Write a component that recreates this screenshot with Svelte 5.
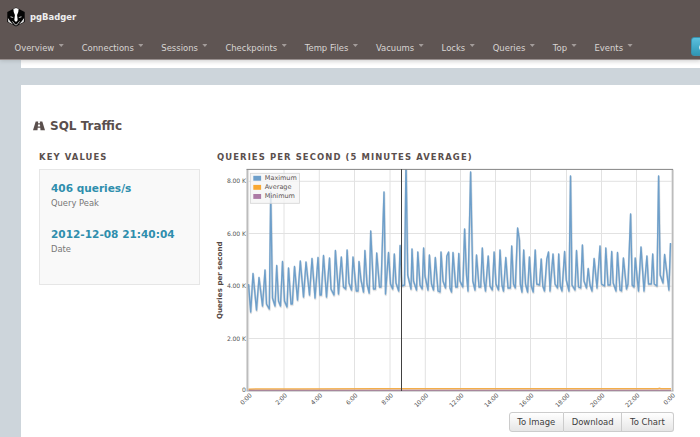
<script>
  const menu = ['Overview', 'Connections', 'Sessions', 'Checkpoints', 'Temp Files', 'Vacuums', 'Locks', 'Queries', 'Top', 'Events'];
  const keys = [
    { value: '406 queries/s', label: 'Query Peak' },
    { value: '2012-12-08 21:40:04', label: 'Date' }
  ];
  const legend = [
    { name: 'Maximum', color: '#6e9fca' },
    { name: 'Average', color: '#f9a832' },
    { name: 'Minimum', color: '#ad7ba6' }
  ];
  const rows = [[181.3, '8.00 K'], [233.5, '6.00 K'], [286.2, '4.00 K'], [338.5, '2.00 K'], [390.3, '0']];
  const cols = [[248.7, '0:00'], [284, '2:00'], [319.3, '4:00'], [354.5, '6:00'], [390, '8:00'], [425.3, '10:00'], [460.5, '12:00'], [495.5, '14:00'], [530.5, '16:00'], [566.5, '18:00'], [601.5, '20:00'], [636.5, '22:00'], [672, '0:00']];
  const traffic = `248.5,284 250.7,312 253,273.5 256.5,310 259,277.5 262.5,306 265,270 266.5,304 269.3,309 270.7,192 272.5,298 275,306 276.7,265.5 278.5,301 280.5,306 282.5,261.5 284.5,301 287,307 288.5,268 291,304 292.3,304 294.5,266.5 297.5,300 300.3,261 303.5,297 306,262 309.5,295 312,258.5 315,298 318,257.5 320,295 321.3,295 323.5,255.5 326.5,297 329.5,258 331,289 334,295 335.4,250.5 338.5,294 341.3,257 343.5,287 345.7,289 347.1,250 349,283 351.5,290 353,257 356.3,291 358,291 359,261.5 361,280 363.5,292 364.9,250.5 367,284 369.2,293 370.7,231 373.5,289 375.3,289 376.7,253 379.5,287 381,287 384,192 385.5,294 388.5,252.5 390.5,284 392.7,289 394.3,254 396,283 398.7,291 400.1,245.5 401.8,286 404.5,285 406,160 407.7,275 411,289 412,249 413.5,281 416.5,290 417.8,252 420,285 422.2,289 423.6,248 425,276 428,290 429.4,255 431.5,284 433.5,290 435.3,257.5 438,291 440,292 441,252 443,281 445.5,288 446.8,256 448.6,252 450,288 451.5,292 453,252.5 455.7,287 457.3,287 458.8,253.5 460,281 462.8,287 464.6,229 466.5,275 468,291 470.6,172 472.8,281 475,290 476.5,255 479,287 480.7,287 482.3,248 484,281 485.5,291 488.2,256 490,286 492.3,290 494.1,252 496,284 498.5,290 500,250 502,285 503.5,291 505.8,257.5 508,288 510.3,288 511.7,246 513.5,284 515.3,288 517.6,228 519.4,240 520.3,284 522,292 523.7,250 525.5,284 527.6,292 529.4,257 531.3,286 533.2,292 535.2,250 536.7,284 539.5,285 541.2,259 542.8,286 544.5,291 546.8,259 548.5,252 550,291 553,254 555,284 557.5,288 558.7,254 560.3,286 562,291 564.6,251.5 566.3,280 569,291 570.5,176 572,285 575,290 576.5,250.5 578.5,287 580.7,288 582.4,245 584,281 586.5,288 588.2,268.5 590,285 592,291 594.1,258.5 597,288 600,246 601.5,284 604.5,286 605.8,248 608,285 610.2,285 611.7,251.5 613.2,283 616,291 617.5,252.5 620,290 621.5,291 623.4,258 626.5,289 628,284 630.6,214 632.2,285 634,287 635.2,258 638.5,291 641,247 644,291 646.9,256 648.5,284 651.3,284 652.7,254 654.2,284 656.9,286 658.6,176 660.2,275 663,283 664.6,254.5 666.5,270 668.9,290 670.5,243`;
</script>

<div class="page">
  <header>
    <div class="brand">
      <svg width="18" height="20" viewBox="0 0 18 20">
        <path d="M9 .5 17.7 5v10L9 19.5.3 15V5Z" fill="#050505" />
        <path d="M6.4 2 9 .9 11.6 2l-.3 3.1-1.2 3 .6 5.1L9 15l-1.7-1.8.6-5.1-1.2-3Z" fill="#fff" />
        <path d="m.9 11 2.3 3.2 3 3.3L1.3 15Zm16.2 0-2.3 3.2-3 3.3 4.9-2.5Z" fill="#e8e8e8" />
        <path d="m3.4 9 3 1.2-.4.9-2.3-.6Zm11.2 0-3 1.2.4.9 2.3-.6Z" fill="#aaa" />
        <path d="m5.5 14.4 2.6 3.4h1.8l2.6-3.4" fill="none" stroke="#ddd" stroke-width=".8" />
      </svg>
      <b>pgBadger</b>
    </div>
    <nav>
      {#each menu as item}
        <span class="item">{item}<i></i></span>
      {/each}
    </nav>
    <span class="about">
      <svg width="9" height="9" viewBox="0 0 9 9"><circle cx="4.5" cy="4.5" r="4.3" fill="#e9f7fb" /><path d="M4.5 4v3M4.5 2v1" stroke="#3ba2c1" stroke-width="1.2" /></svg>
    </span>
  </header>

  <div class="previous"></div>

  <section>
    <h1>
      <svg width="12" height="10" viewBox="0 0 12 10">
        <path fill-rule="evenodd" fill="#5a4f4d" d="M2.7.4h2.5L5 2.3h2L6.8.4h2.5L12 9.3H7.5l-.2-2.5H4.7l-.2 2.5H0ZM5 3.5l-.2 2h2.4l-.2-2Z" />
      </svg>
      SQL Traffic
    </h1>
    <div class="columns">
      <div class="left">
        <h2>KEY VALUES</h2>
        <div class="well">
          {#each keys as key}
            <div class="key"><strong>{key.value}</strong><small>{key.label}</small></div>
          {/each}
        </div>
      </div>
      <div class="right">
        <h2>QUERIES PER SECOND (5 MINUTES AVERAGE)</h2>
        <svg class="chart" width="469" height="246" viewBox="212 164 469 246">
          <defs>
            <clipPath id="plot"><rect x="247" y="169" width="426" height="222" /></clipPath>
          </defs>
          <g stroke="#e2e2e2" stroke-width="1">
            {#each rows as [y]}<path d="M247 {y}H672" />{/each}
            {#each cols as [x]}<path d="M{x} 169.5V390.5" />{/each}
          </g>
          <g clip-path="url(#plot)" fill="none" stroke-linejoin="round">
            <polyline points={traffic} stroke="#000" stroke-opacity=".1" stroke-width="2.2" transform="translate(.3 1.2)" />
            <polyline points={traffic} stroke="#6e9fca" stroke-opacity=".2" stroke-width="2.1" />
            <polyline points={traffic} stroke="#6e9fca" stroke-width="1.35" />
            <path d="M248.5 389.2 270 388.9 300 389.1 380 388.8H658l1-.5 2 .5h10" stroke="#f4ae4a" stroke-width="1.5" />
            <path d="M248.5 390.4H671" stroke="#a87898" stroke-width="1.2" />
          </g>
          <path d="M247.3 169.5V391M672.7 169.5V391" stroke="#bcbcbc" stroke-width="1.7" />
          <path d="M246.5 391.1H673.5" stroke="#aaa" stroke-width=".8" />
          <path d="M246.5 169.4H673" stroke="#858585" stroke-width="1" />
          <path d="M401.5 169V391" stroke="#414141" stroke-width="1" />
          <rect x="250.5" y="173.3" width="49" height="30" fill="#f5f5f5" fill-opacity=".8" stroke="#d5d5d5" stroke-width=".8" />
          {#each legend as l, i}
            <rect x="253.3" y={175.8 + i * 9.1} width="7.8" height="4.9" fill={l.color} />
            <text class="legend" x="264.8" y={180.2 + i * 9.1}>{l.name}</text>
          {/each}
          {#each rows as [y, label]}
            <text class="tick" x="245.8" y={y + 2} text-anchor="end">{label}</text>
          {/each}
          {#each cols as [x, label]}
            <text class="tick" text-anchor="end" transform="translate({x + 3.4} {395.8}) rotate(-45)">{label}</text>
          {/each}
          <text class="axis" textLength="77.5" transform="translate(222.3 319) rotate(-90)">Queries per second</text>
        </svg>
        <div class="buttons"><button>To Image</button><button>Download</button><button>To Chart</button></div>
      </div>
    </div>
  </section>
</div>

<style>
  :global(body) { margin: 0; background: #cdd5db; }
  .page {
    width: 700px; height: 437px; overflow: hidden; box-sizing: border-box;
    font: 8.45px/12px "DejaVu Sans", Verdana, sans-serif; color: #5a4f4d;
    background: #cdd5db;
  }
  header {
    position: relative; height: 59.5px; background: #5f5553; color: #d9d5d3;
    border-bottom: 1px solid #988f8e; box-sizing: border-box; box-shadow: 0 1px 4px #0002;
  }
  .brand { display: flex; align-items: center; height: 33px; padding-left: 7px; gap: 5px; color: #eee; }
  .brand svg { display: block; }
  nav { display: flex; padding: 9px 0 0 14.5px; gap: 17.9px; }
  .item { display: flex; white-space: nowrap; }
  .item i { width: 5.2px; height: 3px; margin: 2px 0 0 4.4px; background: #a39c9a; clip-path: polygon(0 0, 100% 0, 50% 100%); }
  .about {
    position: absolute; left: 691px; top: 36.5px; width: 40px; height: 19.5px; box-sizing: border-box;
    padding: 5px 7px; border: 1px solid #3992ae; border-radius: 3px;
    background: linear-gradient(#5bc0de, #2f96b4);
  }
  .about svg { display: block; }
  .previous { height: 8.5px; margin: 0 0 17px 21px; background: linear-gradient(#f3f3f3, #fff 6px); }
  section { height: 352px; margin-left: 21px; padding: 33px 0 0 12px; box-sizing: border-box; background: #fff; }
  h1 { display: flex; align-items: center; gap: 5px; margin: 0; font-size: 12px; line-height: 16px; }
  h2 { margin: 0; font-size: 8.45px; line-height: 12px; letter-spacing: 1.09px; white-space: nowrap; }
  .columns { display: flex; padding: 17px 0 0 6px; }
  .left { width: 161px; }
  .right { margin-left: 17px; width: 464px; }
  .well { height: 115.5px; margin-top: 6px; padding: 11px 11px; box-sizing: border-box; background: #f9f9f9; border: 1px solid #e6e6e6; }
  .key { height: 45.5px; }
  .key strong { display: block; color: #2f8ead; font-size: 10.55px; line-height: 14px; white-space: nowrap; }
  .key small { display: block; padding-top: 1px; font-size: 8.35px; line-height: 15px; color: #777; }
  .chart { display: block; margin: 1px 0 0 -5px; }
  .legend { font-size: 6.5px; fill: #5a5351; }
  .tick { font-size: 6.1px; letter-spacing: -.1px; fill: #545454; }
  .axis { font-size: 7px; font-weight: bold; fill: #534744; }
  .buttons { display: flex; width: 165px; margin: 2px 0 0 291.5px; }
  button {
    flex: 1 1 auto; height: 20px; margin: 0; padding: 0; font: inherit; color: #3d3d3d;
    border: 1px solid #ccc; border-left-width: 0; background: linear-gradient(#fff, #e6e6e6); white-space: nowrap;
  }
  button:first-child { border-left-width: 1px; border-radius: 3px 0 0 3px; }
  button:last-child { border-radius: 0 3px 3px 0; }
</style>
